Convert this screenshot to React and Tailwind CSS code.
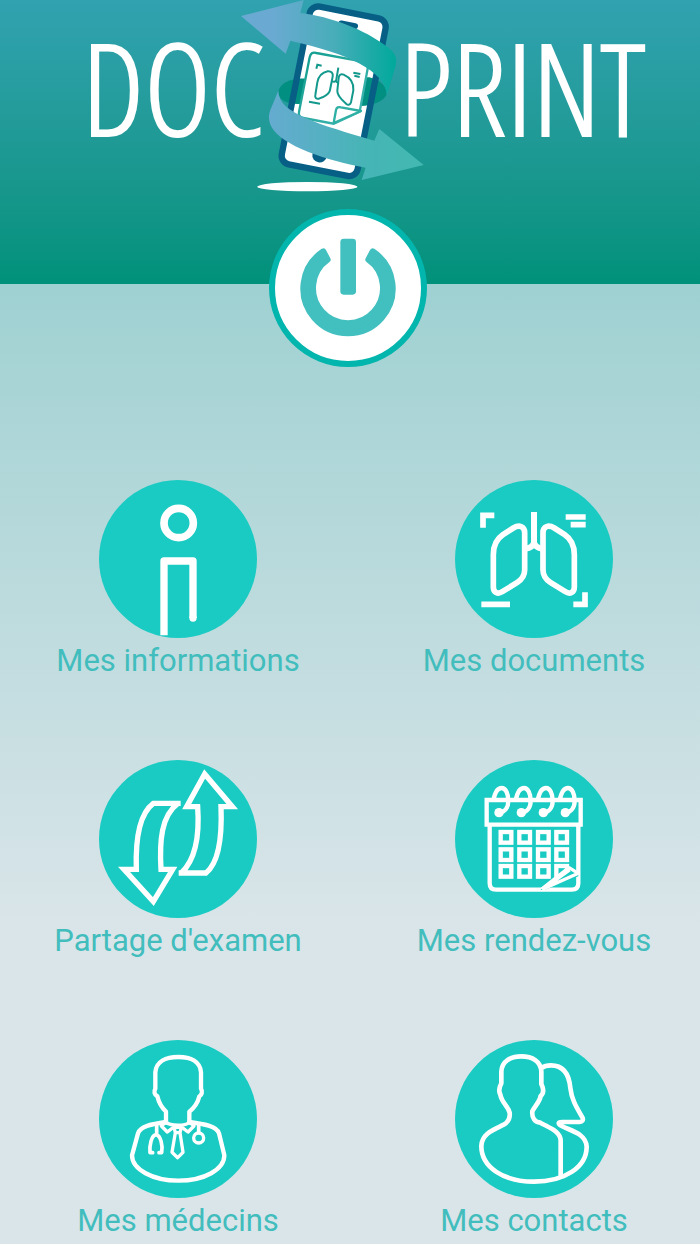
const InfoIcon = () => (
  <svg viewBox="27 28 474 474" className="w-full" fill="none" stroke="#fff" aria-hidden="true">
    <circle cx="264" cy="265" r="237" fill="#19cbc2" stroke="none" />
    <circle cx="266" cy="157" r="44" strokeWidth="23" />
    <path d="M222 494V271H309V442" strokeWidth="22" strokeLinejoin="round" />
    <circle cx="309" cy="442" r="11" fill="#fff" stroke="none" />
  </svg>
);

const DocumentsIcon = () => (
  <svg viewBox="30 28 474 474" className="w-full" fill="none" stroke="#fff" aria-hidden="true">
    <circle cx="267" cy="265" r="237" fill="#19cbc2" stroke="none" />
    <path
      d="M205 172C222 162 239 166 239 186V298C239 314 230 327 216 336L172 363C158 372 145 365 145 349V252C145 226 156 204 174 192Z"
      strokeWidth="17"
    />
    <path
      d="M328 172C311 162 294 166 294 186V298C294 314 303 327 317 336L361 363C375 372 388 365 388 349V252C388 226 377 204 359 192Z"
      strokeWidth="17"
    />
    <path d="M267 124V222M241 234C254 232 264 227 267 216C270 227 280 232 293 234" strokeWidth="18" />
    <path d="M114 171V134H148M362 139H422M377 162H422M109 401H195M385 401H420V365" strokeWidth="17" />
  </svg>
);

const ShareIcon = () => (
  <svg
    viewBox="27 28 474 474"
    className="w-full"
    fill="none"
    stroke="#fff"
    strokeWidth="16"
    aria-hidden="true"
  >
    <circle cx="264" cy="265" r="237" fill="#19cbc2" stroke="none" />
    <path d="M272 158H190C150 188 136 262 139 356H102L190 453L248 356H213C208 270 214 195 264 158" />
    <path d="M266 367H348C384 338 397 272 393 168H427L344 70L290 168H323C328 240 322 322 274 367" />
  </svg>
);

const CalendarIcon = () => (
  <svg
    viewBox="30 28 474 474"
    className="w-full"
    fill="none"
    stroke="#fff"
    strokeWidth="13"
    aria-hidden="true"
  >
    <circle cx="267" cy="265" r="237" fill="#19cbc2" stroke="none" />
    <path d="M125 148H407V222H125Z" />
    <path d="M134 224V398C134 411 140 417 153 417H380C394 417 400 411 400 398V224" />
    {[162, 229, 295, 361].map((x) => (
      <g key={x} transform={`translate(${x} 186)`}>
        <path d="M-17 -36C-13 -58 -6 -74 8 -74C20 -74 28 -57 28 -36C28 -16 18 -2 0 0" />
        <circle r="14" fill="#fff" stroke="none" />
      </g>
    ))}
    {[260, 312, 362].map((y) =>
      [183, 239, 295, 350].map((x) => (
        <rect key={`${x}-${y}`} x={x - 16} y={y - 16} width="32" height="32" strokeWidth="13" />
      ))
    )}
    <path d="M286 417L370 350L400 366V377L300 417Z" fill="#19cbc2" stroke="none" />
    <path d="M290 415L372 351L400 368L296 414L374 358" strokeWidth="10" strokeLinejoin="round" />
  </svg>
);

const DoctorIcon = () => (
  <svg
    viewBox="27 28 474 474"
    className="w-full"
    fill="none"
    stroke="#fff"
    strokeWidth="13"
    strokeLinejoin="round"
    strokeLinecap="round"
    aria-hidden="true"
  >
    <circle cx="264" cy="265" r="237" fill="#19cbc2" stroke="none" />
    <path d="M228 276V243C214 230 206 214 202 197C193 193 191 182 196 174V125C198 92 228 79 265 79C302 79 331 92 333 125V174C338 182 336 193 328 197C324 214 315 230 298 243V276" />
    <path d="M228 274C188 280 151 286 144 308L126 374C126 416 188 450 265 450C344 450 403 416 403 374L387 308C380 286 341 280 298 274" />
    <path d="M228 274L214 286L232 304L250 290M298 274L312 286L294 304L276 290M228 274C240 287 288 287 298 274" strokeWidth="10" />
    <path d="M252 290H274L270 306H256ZM256 306L246 365L263 381L279 365L270 306" strokeWidth="10" />
    <path d="M200 286V308M188 366H180C178 345 184 314 198 312C212 314 219 345 215 366H207M326 286V304" strokeWidth="11" />
    <circle cx="326" cy="322" r="15" strokeWidth="10" />
  </svg>
);

const ContactsIcon = () => (
  <svg
    viewBox="30 28 474 474"
    className="w-full"
    fill="none"
    stroke="#fff"
    strokeWidth="14"
    strokeLinejoin="round"
    strokeLinecap="round"
    aria-hidden="true"
  >
    <circle cx="267" cy="265" r="237" fill="#19cbc2" stroke="none" />
    <path d="M347 436V330C347 302 312 291 286 276C270 274 260 262 262 242C270 225 284 214 287 196C296 188 296 174 289 160V122C287 92 262 77 229 77C196 77 171 92 169 122V158C162 170 162 184 166 192C170 216 190 228 194 246C196 264 190 274 176 282C148 296 110 308 109 346C109 410 176 453 267 453C358 453 425 410 425 348C423 308 376 300 350 286C338 280 338 274 352 274H404C412 274 416 268 412 260C396 232 380 208 376 172C372 128 352 104 318 104C304 104 296 107 289 112" />
  </svg>
);

const PowerIcon = () => (
  <svg viewBox="45 46 438 438" className="w-full" fill="#42bfbf" aria-hidden="true">
    <path
      d="M190 155A134 134 0 1 0 338 155L325 180A105 105 0 1 1 203 180Z"
      stroke="#42bfbf"
      strokeWidth="18"
      strokeLinejoin="round"
    />
    <rect x="241" y="117" width="47" height="168" rx="10" />
  </svg>
);

const LogoMark = () => (
  <svg viewBox="30 0 549 600" className="relative -mx-6 h-[200px] w-[183px] shrink-0" fill="none" aria-hidden="true">
    <defs>
      <linearGradient id="ribbonTop" x1="0" y1="0" x2="1" y2="0">
        <stop offset="0.2" stopColor="#6aaad2" />
        <stop offset="0.6" stopColor="#48adb9" />
        <stop offset="1" stopColor="#00a99b" />
      </linearGradient>
      <linearGradient id="ribbonBottom" x1="0" y1="0" x2="1" y2="0">
        <stop offset="0" stopColor="#65abd0" />
        <stop offset="0.65" stopColor="#45b5b5" />
        <stop offset="1" stopColor="#43b8b1" />
      </linearGradient>
      <linearGradient id="sheet" x1="0" y1="0" x2="1" y2="1">
        <stop offset="0" stopColor="#0f9d8c" />
        <stop offset="1" stopColor="#45b8b5" />
      </linearGradient>
    </defs>

    {/* shadow under the phone */}
    <ellipse cx="229" cy="560" rx="150" ry="14" fill="#fff" />

    {/* phone */}
    <rect x="-116" y="-241" width="232" height="482" rx="24" fill="#fff" transform="translate(308 274) rotate(11.2)" />
    <path
      d="M142 278C146 244 190 234 225 236L415 232C450 240 470 262 466 286C456 306 420 318 390 318L200 312C168 310 144 300 142 278Z"
      fill="#008f80"
    />
    <g transform="translate(308 274) rotate(11.2)">
      <rect x="-116" y="-241" width="232" height="482" rx="26" stroke="#075f86" strokeWidth="19" />
      <rect x="-26" y="-213" width="60" height="18" rx="9" fill="#075f86" />
      <circle cx="-4" cy="196" r="22" fill="#075f86" />
    </g>

    {/* scanned sheet */}
    <path
      d="M256 159L396 185C408 188 412 194 410 206L386 335L308 371L217 354C206 352 202 346 204 336L236 172C239 160 244 156 256 159Z"
      fill="#fff"
      stroke="url(#sheet)"
      strokeWidth="7"
    />
    <path d="M308 369L315 330C317 322 322 320 330 322L390 333Z" fill="#fff" stroke="#2fb0a5" strokeWidth="7" strokeLinejoin="round" />
    <g stroke="#12998c" strokeWidth="6">
      <path d="M290 214C301 213 307 219 305 230L297 270C295 282 286 286 276 291L264 296C256 298 251 293 253 285L259 247C263 228 275 217 290 214Z" />
      <path d="M338 224C329 220 324 225 323 234L319 272C319 284 325 290 332 298L346 312C352 317 358 314 360 307L367 271C369 250 358 233 338 224Z" />
      <path d="M322 203L315 244M303 243C308 247 312 246 315 242C317 247 319 250 324 249" />
      <path d="M256 206L259 194L272 197M367 218L388 222M370 227L386 231M234 305L267 311" />
    </g>

    {/* ribbons */}
    <path
      d="M30 48L218 0L208 39C300 50 400 88 468 140C494 160 498 172 494 196L468 284C462 212 350 160 178 122L164 161Z"
      fill="url(#ribbonTop)"
    />
    <path
      d="M142 272C140 340 270 374 430 422L445 387L578 495L392 540L404 503C290 482 150 438 120 378C112 358 112 348 118 330Z"
      fill="url(#ribbonBottom)"
    />
  </svg>
);

const menuItems = [
  { label: 'Mes informations', Icon: InfoIcon },
  { label: 'Mes documents', Icon: DocumentsIcon },
  { label: "Partage d'examen", Icon: ShareIcon },
  { label: 'Mes rendez-vous', Icon: CalendarIcon },
  { label: 'Mes médecins', Icon: DoctorIcon },
  { label: 'Mes contacts', Icon: ContactsIcon },
];

// both words share the space left by the mark, each hugging it
const Header = () => (
  <header className="h-[284px] bg-linear-to-b from-[#31a2b0] to-[#00917a]">
    <h1 className="grid grid-cols-[minmax(0,1fr)_auto_minmax(0,1fr)] pr-9 font-['Open_Sans_Condensed_Light','Open_Sans_Condensed','Roboto_Condensed','Roboto',sans-serif] text-[128px] leading-[174px] font-light text-white [-webkit-text-stroke:2px_#fff]">
      <span className="text-right">DOC</span>
      <LogoMark />
      <span>PRINT</span>
    </h1>
  </header>
);

const MenuItem = ({ label, Icon }) => (
  <li className="flex justify-center">
    <button type="button" className="flex cursor-pointer flex-col items-center">
      <span className="block w-[158px]">
        <Icon />
      </span>
      <span className="text-[31px] leading-[46px] whitespace-nowrap text-[#42bdbd]">{label}</span>
    </button>
  </li>
);

const App = () => (
  <div className="min-h-screen bg-linear-to-b from-[#83c8c8] via-[#dae5e9] via-75% to-[#dae5e9] font-['Roboto',sans-serif]">
    <Header />
    <main>
      <div className="-mt-[75px] flex justify-center pr-1">
        <button
          type="button"
          aria-label="Déconnexion"
          className="size-[158px] cursor-pointer rounded-full border-6 border-[#02b5ad] bg-white"
        >
          <PowerIcon />
        </button>
      </div>
      <ul className="mt-[113px] grid grid-cols-2 gap-x-6 gap-y-[76px] pl-3">
        {menuItems.map((item) => (
          <MenuItem key={item.label} {...item} />
        ))}
      </ul>
    </main>
  </div>
);

export default App;
